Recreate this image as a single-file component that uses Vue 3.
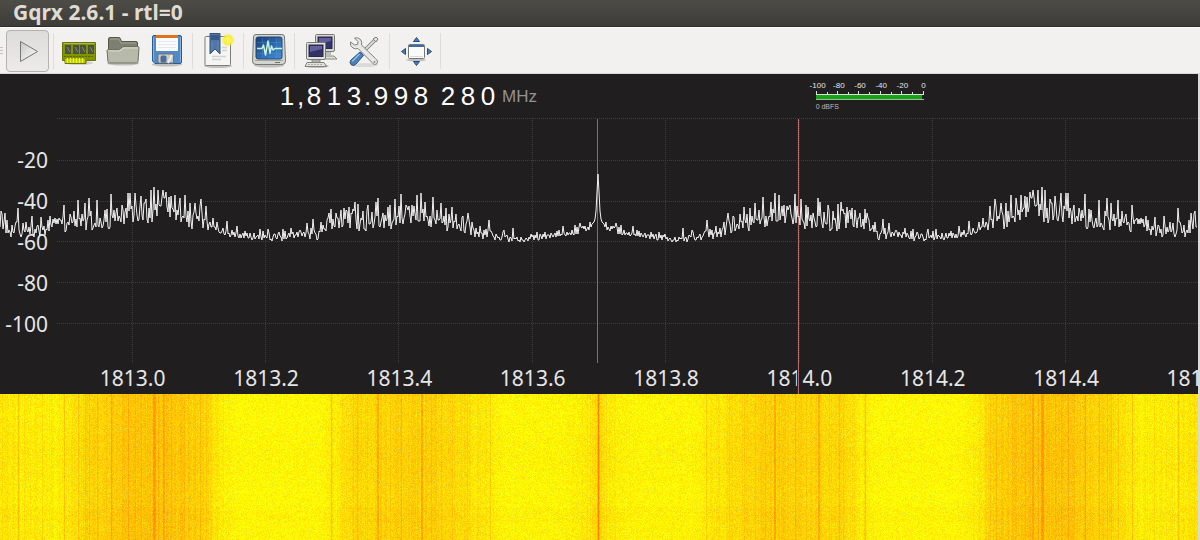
<script setup>
import { onMounted, onBeforeUnmount, ref } from 'vue'

const WIDTH = 1198
const CENTER = 598

const digits = ['1', ',', '8', '1', '3', '.', '9', '9', '8', ' ', '2', '8', '0']
const meterLabels = ['-100', '-80', '-60', '-40', '-20', '0']
const dbLabels = ['-20', '-40', '-60', '-80', '-100']
const freqLabels = ['1813.0', '1813.2', '1813.4', '1813.6', '1813.8', '1814.0', '1814.2', '1814.4', '1814.6']
const gridX = [132, 265, 398, 532, 665, 799, 932, 1065]
const gridY = [0, 42, 83, 123, 164, 205]

function makeRandom(seed) {
  let s = seed
  return () => {
    s = (s + 0x6d2b79f5) | 0
    let t = Math.imul(s ^ (s >>> 15), 1 | s)
    t = (t + Math.imul(t ^ (t >>> 7), 61 | t)) ^ t
    return ((t ^ (t >>> 14)) >>> 0) / 4294967296
  }
}

function interpolate(knots, x) {
  if (x <= knots[0][0]) return knots[0][1]
  for (let i = 1; i < knots.length; i++) {
    if (x <= knots[i][0]) {
      const [x0, y0] = knots[i - 1]
      const [x1, y1] = knots[i]
      return y0 + ((y1 - y0) * (x - x0)) / (x1 - x0)
    }
  }
  return knots[knots.length - 1][1]
}

/* The band is symmetric about the centre frequency: the lower half is
   described here and reflected for the upper half. */
const peaks = [
  [1, 211], [5, 213], [18, 208], [32, 216], [41, 217], [53, 219], [64, 205], [71, 217], [78, 200], [85, 203],
  [89, 198], [97, 200], [111, 194], [122, 205], [128, 193], [130, 193], [135, 193], [141, 196], [146, 199],
  [151, 190], [154, 187], [158, 190], [163, 190], [166, 192], [171, 196], [175, 195], [180, 198], [185, 195],
  [190, 203], [195, 203], [201, 199], [206, 206], [213, 218], [227, 221], [237, 226], [260, 229], [268, 229],
  [283, 229], [291, 228], [307, 223], [313, 219], [321, 222], [329, 213], [331, 209], [344, 208], [349, 207],
  [355, 202], [358, 204], [368, 205], [376, 202], [378, 198], [390, 205], [395, 199], [401, 194], [406, 205],
  [417, 195], [421, 193], [425, 202], [433, 197], [441, 203], [446, 208], [452, 207], [462, 217], [468, 213],
  [480, 226], [489, 220], [504, 230], [513, 228], [540, 234], [563, 226], [575, 225], [580, 223], [590, 222]
]
const floor = [
  [0, 227], [12, 241], [18, 238], [30, 240], [40, 239], [50, 232], [60, 231], [70, 234], [80, 228], [90, 232],
  [100, 228], [105, 232], [115, 227], [130, 222], [147, 226], [160, 217], [175, 221], [187, 231], [203, 229],
  [210, 232], [230, 237], [255, 241], [285, 241], [300, 237], [315, 242], [330, 235], [340, 229], [358, 232],
  [380, 230], [400, 228], [420, 225], [440, 230], [460, 232], [480, 239], [500, 241], [516, 243], [540, 240],
  [560, 237], [575, 235], [590, 230], [593, 226]
]
const spread = [
  [0, 19], [50, 17], [75, 23], [110, 25], [200, 25], [212, 14], [230, 10], [290, 11], [310, 16], [335, 24], [450, 23],
  [465, 18], [485, 12], [510, 9], [560, 8], [593, 7]
]

function buildHalf() {
  const rnd = makeRandom(91)
  const out = []
  const peakMap = new Map(peaks)
  let up = false
  for (let x = 0; x <= 593; x++) {
    const low = interpolate(floor, x)
    const span = interpolate(spread, x)
    if (rnd() < 0.6) up = !up
    const level = up ? 0.35 + rnd() * 0.6 : rnd() * 0.5
    out.push(peakMap.get(x) ?? Math.round(low - span * level))
  }
  out.push(222, 219, 211, 192)
  return out
}

const half = buildHalf()
const points = []
for (let x = 0; x < WIDTH; x++) {
  const d = x <= CENTER ? x : 2 * CENTER - x
  const y = d === CENTER ? 174 : half[Math.max(d, 0)]
  points.push(`${x},${y - 118}`)
}
const trace = points.join(' ')

const tone = [
  [0, 226], [20, 234], [60, 236], [72, 226], [86, 212], [110, 206], [130, 198], [170, 194], [200, 206], [222, 236],
  [236, 246], [320, 246], [340, 230], [356, 212], [430, 206], [462, 218], [482, 232], [505, 244], [560, 244],
  [585, 236], [595, 218]
]
const streaks = new Map([
  [2, 12], [18, 26], [19, 10], [42, 12], [64, 30], [78, 18], [85, 22], [89, 22], [97, 16], [111, 34], [112, 18],
  [122, 16], [128, 22], [135, 22], [141, 14], [153, 32], [154, 42], [155, 26], [158, 16], [163, 34], [164, 26],
  [171, 14], [184, 18], [195, 12], [200, 22], [206, 14], [331, 34], [332, 16], [353, 18], [357, 18],
  [377, 28], [378, 40], [390, 12], [395, 14], [401, 20], [417, 18], [421, 42], [422, 34], [431, 20], [441, 14],
  [452, 18], [467, 24], [490, 22], [597, 36], [598, 96]
])

const waterfall = ref(null)

function paintWaterfall() {
  const canvas = waterfall.value
  if (!canvas) return
  const w = Math.max(1, canvas.clientWidth)
  const h = Math.max(1, canvas.clientHeight)
  canvas.width = w
  canvas.height = h
  const ctx = canvas.getContext('2d')
  const image = ctx.createImageData(w, h)
  const rnd = makeRandom(2024)
  const columns = []
  const jitter = Array.from({ length: CENTER + 1 }, () => rnd() * 16 - 8)
  for (let x = 0; x < w; x++) {
    const pos = Math.round((x * WIDTH) / w)
    const d = Math.max(0, pos <= CENTER ? pos : 2 * CENTER - pos)
    const base = interpolate(tone, d)
    columns.push(base + jitter[d] * (base > 238 ? 0.2 : 1) - (streaks.get(d) || 0))
  }
  for (let y = 0; y < h; y++) {
    const row = Math.sin(y / 13) * 2 - (y > 112 && y < 128 ? 4 : 0)
    for (let x = 0; x < w; x++) {
      const i = (y * w + x) * 4
      const n = (rnd() + rnd() - 1) * 26
      const speck = rnd()
      const g = columns[x] + row + n
      image.data[i] = speck > 0.98 ? 212 : 253
      image.data[i + 1] = g
      image.data[i + 2] = speck > 0.98 ? 60 : speck * 10
      image.data[i + 3] = 255
    }
  }
  ctx.putImageData(image, 0, 0)
}

onMounted(() => {
  paintWaterfall()
  window.addEventListener('resize', paintWaterfall)
})
onBeforeUnmount(() => window.removeEventListener('resize', paintWaterfall))
</script>

<template>
  <div class="window">
    <header class="titlebar">
      <h1>Gqrx 2.6.1 - rtl=0</h1>
    </header>

    <div class="toolbar" role="toolbar" aria-label="Main">
      <span class="handle"></span>
      <button class="tool play" type="button" aria-label="Start DSP">
        <svg viewBox="0 0 36 36">
          <defs>
            <linearGradient id="playFill" x1="0" y1="0" x2="1" y2="1">
              <stop offset="0" stop-color="#c4c5c4" /><stop offset=".5" stop-color="#e4e4e3" /><stop offset="1" stop-color="#f4f4f4" />
            </linearGradient>
          </defs>
          <path d="M10.500 8.500V28.500L27.500 18.500Z" fill="url(#playFill)" stroke="#777" stroke-linejoin="round" />
        </svg>
      </button>
      <span class="sep"></span>
      <button class="tool" type="button" aria-label="Configure I/O devices">
        <svg viewBox="0 0 36 36">
          <ellipse cx="18" cy="30" rx="14" ry="2" fill="#00000022" />
          <path d="M1.500 9.500H34.500V27.500H25V30.500H4V27.500H1.500Z" fill="#829500" stroke="#66760a" />
          <path d="M2.500 10.500H33.500" stroke="#adba45" />
          <path d="M4 26H24V30H4Z" fill="#b9c900" />
          <path d="M6.500 25V30M9.500 25V30M12.500 25V30M15.500 25V30M18.500 25V30M21.500 25V30" stroke="#f0f338" stroke-width="1.500" />
          <g fill="#4c5149" stroke="#4b5432">
            <rect x="4.500" y="12.500" width="5" height="8" /><rect x="12.500" y="12.500" width="5" height="8" />
            <rect x="19.500" y="12.500" width="5" height="8" /><rect x="27.500" y="12.500" width="5" height="8" />
          </g>
          <path d="M6 14L9 19M14 14L17 19M21 14L24 19M29 14L32 19" stroke="#858b80" />
          <path d="M3 23.500H33" stroke="#596700" stroke-dasharray="2 1" />
        </svg>
      </button>
      <button class="tool" type="button" aria-label="Open">
        <svg viewBox="0 0 36 36">
          <ellipse cx="18" cy="30.500" rx="16" ry="2" fill="#00000033" />
          <path d="M3.500 28V6Q3.500 4.500 5 4.500H14Q15 4.500 15.500 6L16.500 8.500H31Q32.500 8.500 32.500 10V28Z" fill="#7d8071" stroke="#55584b" />
          <path d="M5 6H14L16 10H31" fill="none" stroke="#a1a491" />
          <path d="M2 18Q2 16.500 3.500 16.500H14L18 13.500H33Q34 13.500 34 15L33 28.500Q33 30 31.500 30H4.500Q3 30 3 28.500Z" fill="#b7baa8" stroke="#6e715f" />
          <path d="M3.500 18H15L19 15H33" fill="none" stroke="#d8dacd" />
        </svg>
      </button>
      <button class="tool" type="button" aria-label="Save">
        <svg viewBox="0 0 36 36">
          <ellipse cx="18" cy="31.500" rx="15" ry="2" fill="#00000033" />
          <path d="M5 2.500H31Q32.500 2.500 32.500 4V29Q32.500 30.500 31 30.500H6L3.500 28V4Q3.500 2.500 5 2.500Z" fill="#528ac5" stroke="#2b5a90" />
          <path d="M4.500 4V27.500M31.500 4V29" stroke="#86b2df" />
          <rect x="7" y="2" width="22" height="16" fill="#f9fafa" />
          <rect x="7" y="2" width="22" height="3" fill="#e3711b" />
          <path d="M9 8.500H27M9 11.500H27M9 14.500H27" stroke="#e6e8e9" />
          <path d="M9 30V22.500Q9 21 10.500 21H23Q24.500 21 24.500 22.500V30Z" fill="#c8cbca" stroke="#68747e" />
          <rect x="12" y="23" width="5" height="6" rx="1" fill="#4270a6" stroke="#626a70" />
          <path d="M19 30L23 22" stroke="#eee" stroke-width="2" />
        </svg>
      </button>
      <span class="sep"></span>
      <button class="tool" type="button" aria-label="Bookmarks">
        <svg viewBox="0 0 36 36">
          <defs>
            <radialGradient id="star"><stop offset="0" stop-color="#fffca0" /><stop offset=".55" stop-color="#f6ed2d" /><stop offset="1" stop-color="#f6ed2d" stop-opacity="0" /></radialGradient>
          </defs>
          <ellipse cx="18" cy="33" rx="14" ry="2" fill="#00000033" />
          <rect x="5" y="3.500" width="25.500" height="29" rx="1" fill="#f5f5f4" stroke="#7c7e7a" />
          <path d="M22 14.500H27M22 17.500H27M12 23.500H26M12 26.500H21" stroke="#d3d4d2" stroke-width="1.500" />
          <path d="M10 0.500H20V21L15 16L10 21Z" fill="#5276aa" stroke="#35527d" />
          <path d="M11 2H19V7H11Z" fill="#375a8b" /><path d="M12 8V17M18 8V17" stroke="#6485b3" />
          <circle cx="28" cy="7" r="7" fill="url(#star)" />
          <path d="M28 2L29.500 5.500L33 7L29.500 8.500L28 12L26.500 8.500L23 7L26.500 5.500Z" fill="#fff25b" />
        </svg>
      </button>
      <span class="sep"></span>
      <button class="tool" type="button" aria-label="DSP">
        <svg viewBox="0 0 36 36">
          <defs>
            <linearGradient id="scope" x1="0" y1="0" x2="1" y2="1"><stop offset="0" stop-color="#183d78" /><stop offset="1" stop-color="#4291dc" /></linearGradient>
          </defs>
          <ellipse cx="18" cy="32.500" rx="15" ry="2" fill="#00000033" />
          <path d="M5 1.500H31Q33.500 1.500 33.500 4L34.500 28Q34.500 31.500 31 31.500H5Q1.500 31.500 1.500 28L2.500 4Q2.500 1.500 5 1.500Z" fill="#d3d5cf" stroke="#777a74" />
          <path d="M4 27.500H32" stroke="#a1a49d" /><path d="M24 29.500H29" stroke="#6e736b" />
          <rect x="5" y="4" width="26" height="22" rx="2" fill="url(#scope)" stroke="#224674" />
          <path d="M6 9.500H30M6 20.500H30M11.500 5V25M18.500 5V25M25.500 5V25" stroke="#6b9fdb" stroke-opacity=".3" />
          <path d="M6 15.500H11L12.500 12L14.500 22L17 8L19 20L20.500 13L22 17L24 15.500H31" fill="none" stroke="#c5f4e0" stroke-width="1.500" stroke-linejoin="round" />
        </svg>
      </button>
      <span class="sep"></span>
      <button class="tool" type="button" aria-label="Remote control">
        <svg viewBox="0 0 36 36">
          <ellipse cx="15" cy="33" rx="12" ry="2" fill="#00000033" />
          <path d="M18 23H32L35 26H19Z" fill="#dfe0db" stroke="#85887f" />
          <path d="M22 17H29V22H22Z" fill="#b9bbb4" />
          <path d="M13.500 2.500Q13.500 1.500 14.500 1.500H31.500Q32.500 1.500 32.500 2.500V17Q32.500 18.500 31 18.500H15Q13.500 18.500 13.500 17Z" fill="#d7d9d1" stroke="#777a72" />
          <rect x="16" y="4" width="14" height="11.500" fill="#35336a" stroke="#29274e" />
          <path d="M17 5H29V8L17 11Z" fill="#62609a" />
          <path d="M10 26H18V30H10Z" fill="#aeb0a9" stroke="#888b83" />
          <path d="M4.500 10.500Q4.500 9.500 5.500 9.500H22.500Q23.500 9.500 23.500 10.500V25Q23.500 26.500 22 26.500H6Q4.500 26.500 4.500 25Z" fill="#e1e2dd" stroke="#777a72" />
          <rect x="7" y="12" width="14" height="11.500" fill="#343169" stroke="#29274e" />
          <path d="M8 13H20V16L8 19Z" fill="#62609a" />
          <path d="M5 29.500H22L24.500 33.500H3Z" fill="#e1e2dd" stroke="#80837b" />
          <path d="M6 31.500H21" stroke="#aaada5" stroke-dasharray="2 1" />
        </svg>
      </button>
      <button class="tool" type="button" aria-label="Settings">
        <svg viewBox="0 0 36 36">
          <ellipse cx="18" cy="32" rx="14" ry="2" fill="#00000018" />
          <path d="M30 6L16 20" stroke="#777b75" stroke-width="3.500" stroke-linecap="round" />
          <path d="M30 6L16 20" stroke="#dadcd7" stroke-width="1.800" stroke-linecap="round" />
          <path d="M27 6L30 4L32 6L30 9Z" fill="#e2e4e1" stroke="#7a7d78" />
          <path d="M4.500 9Q3.500 13 7 15Q9.500 16.500 12 15.500L25.500 29Q28.500 33 31 30.500Q33 28 29.500 25.500L15.500 12Q16.500 9 14.500 6.500Q12 4 8.500 5L12 8.500L11.500 11.500L8.500 12Z" fill="#e7e8e5" stroke="#7e817c" stroke-linejoin="round" />
          <circle cx="28.500" cy="29" r="1" fill="#8c8f8b" />
          <path d="M14 19L17.500 22.500L9.500 31.500Q7.500 33.500 5 31.500Q3 29 5 27Z" fill="#4c80bb" stroke="#285083" />
          <path d="M13.500 21L6 28.500" stroke="#9abddf" stroke-width="1.500" />
        </svg>
      </button>
      <span class="sep"></span>
      <button class="tool" type="button" aria-label="Full screen">
        <svg viewBox="0 0 36 36">
          <ellipse cx="19" cy="27" rx="10" ry="1.500" fill="#00000033" />
          <rect x="11.500" y="11.500" width="16" height="14" rx="1" fill="#fafafa" stroke="#757873" />
          <path d="M12 12H27V14H12Z" fill="#3e69a5" />
          <path d="M13 23.500H26" stroke="#dadbda" />
          <g fill="#4c7db8" stroke="#244b7d" stroke-linejoin="round">
            <path d="M19.500 4.500L22.500 8.500H16.500Z" /><path d="M19.500 32.500L22.500 28.500H16.500Z" />
            <path d="M4.500 18.500L8.500 15.500V21.500Z" /><path d="M34.500 18.500L30.500 15.500V21.500Z" />
          </g>
        </svg>
      </button>
      <span class="sep"></span>
    </div>

    <main class="receiver">
      <section class="readouts">
        <div class="frequency">
          <span v-for="(d, i) in digits" :key="i" :class="/\d/.test(d) ? 'digit' : 'mark'">{{ d }}</span>
          <span class="unit">MHz</span>
        </div>
        <div class="meter">
          <div class="meter-scale"><span v-for="m in meterLabels" :key="m">{{ m }}</span></div>
          <svg class="meter-bar" viewBox="0 0 108 10">
            <path d="M.5 0V3M21.500 0V3M42.500 0V3M64.500 0V3M85.500 0V3M107.500 0V3M11.500 1V3M32.500 1V3M53.500 1V3M75.500 1V3M96.500 1V3M0 3.500H108" stroke="#dedede" />
            <path d="M0 4H106V8H0Z" fill="#14a514" />
            <path d="M0 8.500H108" stroke="#a5b3a5" />
          </svg>
          <div class="level">0 dBFS</div>
        </div>
      </section>

      <section class="plot">
        <svg class="lines" viewBox="0 0 1198 276" preserveAspectRatio="none">
          <g class="grid">
            <path v-for="y in gridY" :key="'y' + y" :d="`M57 ${y}.5H1198`" />
            <path v-for="x in gridX" :key="'x' + x" :d="`M${x}.5 0V245`" />
          </g>
        </svg>
        <div class="db-axis"><span v-for="l in dbLabels" :key="l">{{ l }}</span></div>
        <div class="freq-axis"><span v-for="l in freqLabels" :key="l">{{ l }}</span></div>
        <svg class="lines" viewBox="0 0 1198 276" preserveAspectRatio="none">
          <path d="M597.500 1V245" stroke="#4f7bad" />
          <path d="M797.500 1V276" stroke="#48191d" />
          <path d="M798.500 1V276" stroke="#b3686a" />
          <polyline class="trace" :points="trace" />
        </svg>
      </section>

      <section class="waterfall">
        <canvas ref="waterfall" aria-label="Waterfall"></canvas>
      </section>
    </main>
  </div>
</template>

<style>
body {
  margin: 0;
}
</style>

<style scoped>
.window {
  display: flex;
  flex-direction: column;
  min-height: 100vh;
  background: #201e1f;
  overflow: hidden;
}

.titlebar {
  height: 27px;
  box-sizing: border-box;
  padding-left: 13px;
  background: linear-gradient(#4d4c47, #3d3c38);
  border-bottom: 1px solid #2f2e2b;
}

.titlebar h1 {
  margin: 0;
  font: 700 21px/24px "Noto Sans", sans-serif;
  color: #dfdbd2;
}

.toolbar {
  display: flex;
  align-items: center;
  height: 47px;
  box-sizing: border-box;
  background: #f2f1f0;
  border-top: 1px solid #fbfbfa;
  border-bottom: 1px solid #dcdad8;
}

.handle {
  width: 3px;
  height: 8px;
  margin-right: 3px;
  background: repeating-linear-gradient(#c4c2c0 0 1px, transparent 1px 3px);
}

.tool {
  display: flex;
  align-items: center;
  justify-content: center;
  width: 44px;
  height: 42px;
  box-sizing: border-box;
  padding: 0;
  border: 0;
  background: none;
}

.tool svg {
  flex: none;
  width: 36px;
  height: 36px;
}

.play {
  width: 43px;
  margin-right: 1px;
  border: 1px solid #b5b2ae;
  border-radius: 4px;
  background: linear-gradient(#dddcdb, #ecebea);
}

.sep {
  width: 1px;
  height: 36px;
  margin: 0 3px;
  background: #dfdddb;
}

.receiver {
  display: flex;
  flex: 1;
  flex-direction: column;
  border-right: 2px solid #dcdad8;
  color: #e6e6e6;
}

.readouts {
  display: flex;
  height: 44px;
}

.frequency {
  display: flex;
  flex: 0 0 68%;
  box-sizing: border-box;
  padding-left: 277px;
  font: 26px/44px "Liberation Sans", Arial, sans-serif;
  color: #fff;
}

.digit {
  width: 20px;
  text-align: center;
}

.mark {
  width: 7px;
  text-align: center;
}

.unit {
  margin-left: 4px;
  font-size: 17px;
  line-height: 46px;
  color: #929194;
}

.meter {
  width: 108px;
  margin-left: 1px;
  padding-top: 8px;
  font: 8px/8px "Liberation Sans", Arial, sans-serif;
}

.meter-scale {
  display: flex;
  justify-content: space-between;
  margin: 0 -9px 0 -7px;
}

.meter-scale span {
  width: 18px;
  text-align: center;
}

.meter-bar {
  display: block;
  width: 108px;
  height: 10px;
  margin-top: 1px;
}

.level {
  margin-top: 2px;
  font-size: 7px;
  color: #bbb;
}

.plot {
  position: relative;
  display: flex;
  flex-direction: column;
  justify-content: space-between;
  height: 276px;
  font: 21px/32px "Noto Sans", sans-serif;
}

.lines {
  position: absolute;
  left: 0;
  top: 0;
  width: 100%;
  height: 100%;
}

.grid path {
  stroke: #3e3c3d;
  stroke-dasharray: 1 1;
}

.trace {
  fill: none;
  stroke: #f2f2f2;
  stroke-width: 1;
}

.db-axis {
  display: flex;
  flex-direction: column;
  width: 48px;
  padding-top: 22px;
  text-align: right;
}

.db-axis span {
  line-height: 41px;
}

.freq-axis {
  display: flex;
  margin-left: 66px;
  overflow: hidden;
}

.freq-axis span {
  flex: 0 0 11.78%;
  text-align: center;
}

.waterfall {
  position: relative;
  flex: 1;
  min-height: 146px;
}

.waterfall canvas {
  position: absolute;
  inset: 0;
  width: 100%;
  height: 100%;
}
</style>
